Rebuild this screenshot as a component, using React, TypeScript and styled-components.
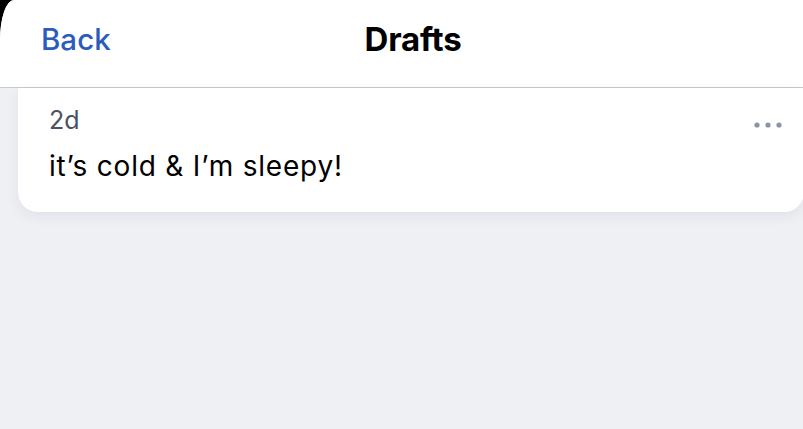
import React, { FC } from 'react'
import styled, { createGlobalStyle } from 'styled-components'

const GlobalStyle = createGlobalStyle`
  html, body {
    margin: 0;
    padding: 0;
    background: #000;
  }
  body {
    font-family: Inter, 'Noto Sans', sans-serif;
    -webkit-font-smoothing: antialiased;
  }
`

interface Draft {
  age: string
  text: string
}

const drafts: Draft[] = [{ age: '2d', text: 'it’s cold & I’m sleepy!' }]

const MoreIcon: FC = () => (
  <svg width="30" height="10" viewBox="0 0 30 10">
    <circle cx="4" cy="5" r="2.6" fill="#8b93a7" />
    <circle cx="15" cy="5" r="2.6" fill="#8b93a7" />
    <circle cx="26" cy="5" r="2.6" fill="#8b93a7" />
  </svg>
)

const DraftCard: FC<Draft> = ({ age, text }) => (
  <Card>
    <CardTop>
      <Age>{age}</Age>
      <MoreButton aria-label="More">
        <MoreIcon />
      </MoreButton>
    </CardTop>
    <DraftText>{text}</DraftText>
  </Card>
)

const App: FC = () => {
  return (
    <>
      <GlobalStyle />
      <Sheet>
        <Header>
          <BackButton>Back</BackButton>
          <Title>Drafts</Title>
          <span />
        </Header>
        <List>
          {drafts.map((d, i) => (
            <DraftCard key={`draft-${i}`} {...d} />
          ))}
        </List>
      </Sheet>
    </>
  )
}

const Sheet = styled.div`
  height: 429px;
  background: #eff0f4;
  border-top-left-radius: 14px 40px;
  overflow: hidden;
  display: flex;
  flex-direction: column;
`

const Header = styled.header`
  height: 88px;
  flex-shrink: 0;
  box-sizing: border-box;
  background: #fff;
  border-bottom: 1px solid #c9cacf;
  display: grid;
  grid-template-columns: 1fr auto 1fr;
  align-items: start;
  padding: 21px 18px 0 41px;
`

const BackButton = styled.button`
  justify-self: start;
  background: none;
  border: none;
  padding: 0;
  font-family: Inter, sans-serif;
  font-size: 29.5px;
  font-weight: 500;
  color: #2b5bbd;
  line-height: 36px;
`

const Title = styled.h1`
  margin: 0;
  font-size: 33px;
  font-weight: 700;
  color: #000;
  line-height: 36px;
  letter-spacing: -0.2px;
`

const List = styled.div`
  display: flex;
  flex-direction: column;
  padding-left: 18px;
`

const Card = styled.div`
  width: 786px;
  box-sizing: border-box;
  background: #fff;
  border-radius: 2px 0 20px 20px;
  box-shadow: 0 4px 14px rgba(30, 40, 70, 0.07);
  padding: 17px 21px 29px 31px;
`

const CardTop = styled.div`
  display: flex;
  justify-content: space-between;
  align-items: flex-start;
`

const Age = styled.span`
  font-size: 25px;
  color: #4a5263;
  line-height: 30px;
`

const MoreButton = styled.button`
  background: none;
  border: none;
  padding: 0;
  display: flex;
  margin-top: 15px;
`

const DraftText = styled.p`
  margin: 14px 0 0;
  font-size: 28px;
  letter-spacing: 0.8px;
  color: #000;
  line-height: 34px;
`

export default App
